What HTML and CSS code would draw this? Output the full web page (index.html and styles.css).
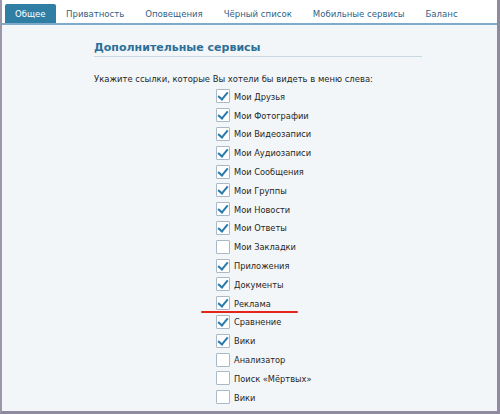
FILE: index.html
```html
<!DOCTYPE html>
<html>
<head>
<meta charset="utf-8">
<link rel="stylesheet" href="styles.css">
</head>
<body>
<div class="frame">
  <div class="tabs">
    <div class="tab active">Общее</div>
    <div class="tab">Приватность</div>
    <div class="tab">Оповещения</div>
    <div class="tab">Чёрный список</div>
    <div class="tab">Мобильные сервисы</div>
    <div class="tab">Баланс</div>
  </div>
  <div class="content">
    <div class="section">
      <h2 class="heading">Дополнительные сервисы</h2>
      <p class="hint">Укажите ссылки, которые Вы хотели бы видеть в меню слева:</p>
      <ul class="list">
        <li class="item"><span class="box on"></span>Мои Друзья</li>
        <li class="item"><span class="box on"></span>Мои Фотографии</li>
        <li class="item"><span class="box on"></span>Мои Видеозаписи</li>
        <li class="item"><span class="box on"></span>Мои Аудиозаписи</li>
        <li class="item"><span class="box on"></span>Мои Сообщения</li>
        <li class="item"><span class="box on"></span>Мои Группы</li>
        <li class="item"><span class="box on"></span>Мои Новости</li>
        <li class="item"><span class="box on"></span>Мои Ответы</li>
        <li class="item"><span class="box"></span>Мои Закладки</li>
        <li class="item"><span class="box on"></span>Приложения</li>
        <li class="item"><span class="box on"></span>Документы</li>
        <li class="item marked"><span class="box on"></span>Реклама</li>
        <li class="item"><span class="box on"></span>Сравнение</li>
        <li class="item"><span class="box on"></span>Вики</li>
        <li class="item"><span class="box"></span>Анализатор</li>
        <li class="item"><span class="box"></span>Поиск «Мёртвых»</li>
        <li class="item"><span class="box"></span>Вики</li>
      </ul>
    </div>
  </div>
</div>
</body>
</html>
```
FILE: styles.css
```css
html, body {
  margin: 0;
  padding: 0;
  background: #f2f6f8;
}
.frame {
  width: 495px;
  height: 411px;
  border-left: 2px solid #9c97a9;
  border-right: 3px solid #8f8a9d;
  border-bottom: 3px solid #8f8a9d;
  background: #f2f6f8;
  overflow: hidden;
  font-family: "DejaVu Sans Condensed", "DejaVu Sans", Verdana, sans-serif;
  font-size: 9px;
  color: #262626;
}
.tabs {
  display: flex;
  height: 23px;
  padding-left: 3px;
  background: #ffffff;
  border-bottom: 2px solid #7eaacb;
  align-items: flex-end;
}
.tab {
  flex-shrink: 0;
  white-space: nowrap;
  height: 19px;
  line-height: 19px;
  padding: 0 10.5px;
  font-size: 9.5px;
  color: #2f5f84;
}
.tab.active {
  background: #2f7ea4;
  color: #ffffff;
  border-radius: 2px 2px 0 0;
  padding: 0 10px;
}
.content {
  padding: 15px 0 0 92px;
}
.section {
  width: 328px;
}
.heading {
  margin: 0;
  font-family: "DejaVu Sans", Verdana, sans-serif;
  font-size: 11px;
  font-weight: bold;
  color: #2c6f98;
  padding-bottom: 1px;
  border-bottom: 1px solid #c8d9e6;
  line-height: 15px;
}
.hint {
  margin: 15px 0 0 0;
  line-height: 14px;
  font-size: 9.4px;
  white-space: nowrap;
}
.list {
  list-style: none;
  margin: 1px 0 0 122px;
  padding: 0;
}
.item {
  position: relative;
  display: flex;
  align-items: center;
  height: 18.8px;
  white-space: nowrap;
  font-size: 9.2px;
}
.box {
  width: 12px;
  height: 12px;
  border: 1px solid #a9b9c7;
  background: #ffffff;
  margin-right: 4px;
  position: relative;
  border-radius: 1px;
  flex-shrink: 0;
}
.box.on::after {
  content: "";
  position: absolute;
  left: 3px;
  top: 0px;
  width: 4px;
  height: 8px;
  border-right: 2px solid #2a7aaa;
  border-bottom: 2px solid #2a7aaa;
  transform: rotate(40deg);
}
.marked::after {
  content: "";
  position: absolute;
  left: -15px;
  bottom: 0px;
  width: 97px;
  height: 2px;
  background: #e3251c;
  border-radius: 1px;
}
```
